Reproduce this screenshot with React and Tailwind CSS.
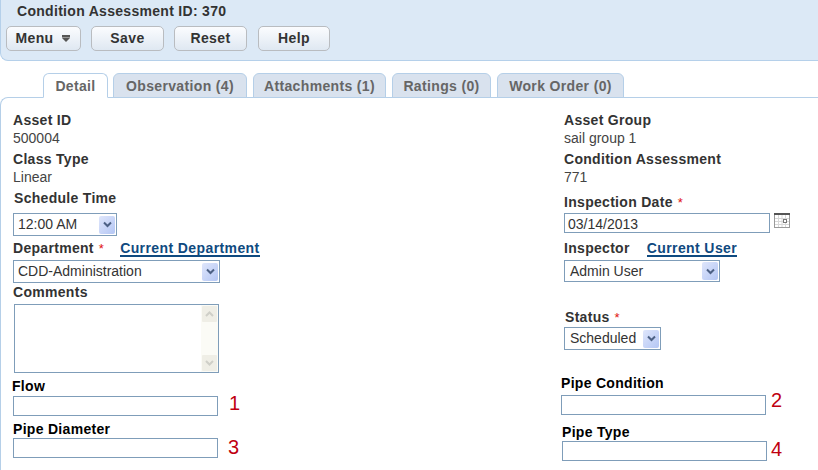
import React from 'react';

const font = "font-['Liberation_Sans',Arial,sans-serif]";

const tabs = [
  { label: 'Detail', active: true, width: 'w-[65px] mr-[-1px]' },
  { label: 'Observation (4)', width: 'w-[134px]' },
  { label: 'Attachments (1)', width: 'w-[133px]' },
  { label: 'Ratings (0)', width: 'w-[99px]' },
  { label: 'Work Order (0)', width: 'w-[127px]' },
];

const Btn = ({ children, className = '' }) => (
  <div
    className={`h-[25px] flex items-center justify-center rounded-[5px] border border-[#b9bcc0] bg-gradient-to-b from-[#fbfcfe] to-[#dfe8f2] text-[14px] font-bold tracking-[0.4px] text-[#333] ${className}`}
  >
    {children}
  </div>
);

const Label = ({ children, className = '' }) => (
  <div className={`text-[14px] leading-[15px] font-bold tracking-[0.3px] text-[#333] ${className}`}>{children}</div>
);

const Value = ({ children, className = '' }) => (
  <div className={`text-[14px] leading-[16px] text-[#444] ${className}`}>{children}</div>
);

const Star = () => <span className="ml-[5px] text-[13px] font-normal text-[#e01010]">*</span>;

const Link = ({ children, className = '' }) => (
  <span className={`border-b-2 border-[#0f4a80] text-[14px] leading-[14px] font-bold tracking-[0.4px] text-[#0f4a80] ${className}`}>
    {children}
  </span>
);

const Select = ({ value, className = '' }) => (
  <div className={`flex items-center justify-between border border-[#7f9db9] bg-white pr-[1px] text-[14px] text-[#333] ${className}`}>
    <span>{value}</span>
    <div className="flex h-[18px] w-[16px] items-center justify-center rounded-[2px] bg-gradient-to-br from-[#dfe6fb] to-[#b4c6f4]">
      <svg width="9" height="7" viewBox="0 0 9 7">
        <path d="M1 1.5 L4.5 5 L8 1.5" fill="none" stroke="#4d6185" strokeWidth="2" />
      </svg>
    </div>
  </div>
);

const TextBox = ({ className = '', value = '' }) => (
  <div className={`h-[20px] w-[205px] border border-[#7f9db9] bg-white pl-[3px] text-[14px] leading-[20px] text-[#333] ${className}`}>{value}</div>
);

const Num = ({ children, className = '' }) => (
  <span className={`text-[20px] leading-[20px] text-[#c00010] ${className}`}>{children}</span>
);

const ScrollBtn = ({ up }) => (
  <div className="flex h-[16px] w-[15px] items-center justify-center rounded-[1px] bg-[#efeee6]">
    <svg width="9" height="6" viewBox="0 0 9 6">
      <path d={up ? 'M1 5 L4.5 1.5 L8 5' : 'M1 1 L4.5 4.5 L8 1'} fill="none" stroke="#cfcfc8" strokeWidth="2" />
    </svg>
  </div>
);

const Calendar = () => (
  <svg width="16" height="15" viewBox="0 0 16 15" className="ml-[4px]">
    <rect x="0.5" y="0.5" width="15" height="14" fill="#fff" stroke="#9a9a9a" />
    <rect x="0" y="0" width="16" height="2" fill="#555" />
    <path d="M4.5 2v12M8 2v12M11.5 2v12M1 5.5h14M1 8.5h14M1 11.5h14" stroke="#d8d8d8" strokeWidth="1" />
    <rect x="9.5" y="6.5" width="3" height="3" fill="#fff" stroke="#777" />
  </svg>
);

export default function App() {
  return (
    <div className={`${font} h-[470px] w-[818px] overflow-hidden bg-white`}>
      {/* Header */}
      <div className="h-[61px] rounded-bl-[8px] border-b border-l border-[#b5d0ea] bg-[#dce9f6]">
        <div className="pt-[2px] pl-[16px] text-[14px] leading-[18px] font-bold tracking-[0.3px] text-[#333]">Condition Assessment ID: 370</div>
        <div className="mt-[6px] flex pl-[5px]">
          <Btn className="w-[75px] pr-[2px]">
            Menu
            <svg width="8" height="7" viewBox="0 0 8 7" className="ml-[8px]">
              <path d="M0 0h8v2H0z" fill="#555" />
              <path d="M0 2h8v1H0z" fill="#999" />
              <path d="M0 3h8L4 7z" fill="#555" />
            </svg>
          </Btn>
          <Btn className="ml-[10px] w-[73px]">Save</Btn>
          <Btn className="ml-[10px] w-[73px]">Reset</Btn>
          <Btn className="ml-[11px] w-[72px]">Help</Btn>
        </div>
      </div>

      {/* Tabs */}
      <div className="mt-[12px] flex h-[25px] items-end gap-[6px] pl-[43px]">
        {tabs.map((t) => (
          <div
            key={t.label}
            className={`flex h-[25px] items-center justify-center rounded-t-[6px] border border-[#b5cfe8] pt-[1px] text-[14px] font-bold tracking-[0.35px] text-[#666] ${t.width} ${
              t.active ? 'z-10 border-b-white bg-white' : 'bg-[#d9e2ee]'
            }`}
          >
            {t.label}
          </div>
        ))}
      </div>

      {/* Detail panel */}
      <div className="mt-[-1px] flex h-[373px] rounded-tl-[8px] border-t border-l border-[#b5cfe8]">
        <div className="w-[548px] shrink-0 pt-[15px] pl-[12px]">
          <Label>Asset ID</Label>
          <Value className="mt-[2px]">500004</Value>
          <Label className="mt-[6px]">Class Type</Label>
          <Value className="mt-[2px]">Linear</Value>
          <Label className="mt-[6px] ml-[1px]">Schedule Time</Label>
          <Select value="12:00 AM" className="mt-[7px] h-[23px] w-[104px] pl-[4px]" />
          <div className="mt-[5px] flex items-baseline">
            <Label>
              Department
              <Star />
            </Label>
            <Link className="ml-[16px]">Current Department</Link>
          </div>
          <Select value="CDD-Administration" className="mt-[3px] h-[23px] w-[207px] pl-[4px]" />
          <Label className="mt-[2px]">Comments</Label>
          <div className="mt-[4px] ml-[1px] flex h-[69px] w-[205px] justify-end border border-[#7f9db9] bg-white">
            <div className="flex w-[17px] flex-col items-center justify-between bg-[#fbfbf6] py-[1px]">
              <ScrollBtn up />
              <ScrollBtn />
            </div>
          </div>
          <Label className="mt-[6px] ml-[-1px] text-black">Flow</Label>
          <div className="mt-[2px] flex items-center">
            <TextBox />
            <Num className="mt-[-6px] ml-[11px]">1</Num>
          </div>
          <Label className="mt-[6px] text-black">Pipe Diameter</Label>
          <div className="mt-[1px] flex items-center">
            <TextBox />
            <Num className="mt-[-3px] ml-[10px]">3</Num>
          </div>
        </div>

        <div className="pt-[15px] pl-[15px]">
          <Label>Asset Group</Label>
          <Value className="mt-[2px]">sail group 1</Value>
          <Label className="mt-[6px]">Condition Assessment</Label>
          <Value className="mt-[2px]">771</Value>
          <Label className="mt-[10px]">
            Inspection Date
            <Star />
          </Label>
          <div className="mt-[3px] flex items-start">
            <TextBox className="w-[206px]" value="03/14/2013" />
            <Calendar />
          </div>
          <div className="mt-[8px] flex items-baseline">
            <Label>Inspector</Label>
            <Link className="ml-[17px]">Current User</Link>
          </div>
          <Select value="Admin User" className="mt-[3px] h-[22px] w-[156px] pl-[5px]" />
          <Label className="mt-[28px] ml-[1px]">
            Status
            <Star />
          </Label>
          <Select value="Scheduled" className="mt-[2px] h-[23px] w-[97px] pl-[5px]" />
          <Label className="mt-[26px] ml-[-3px] text-black">Pipe Condition</Label>
          <div className="mt-[4px] ml-[-3px] flex items-center">
            <TextBox />
            <Num className="mt-[-10px] ml-[5px]">2</Num>
          </div>
          <Label className="mt-[10px] ml-[-2px] text-black">Pipe Type</Label>
          <div className="mt-[1px] ml-[-2px] flex items-center">
            <TextBox />
            <Num className="mt-[-5px] ml-[4px]">4</Num>
          </div>
        </div>
      </div>
    </div>
  );
}
